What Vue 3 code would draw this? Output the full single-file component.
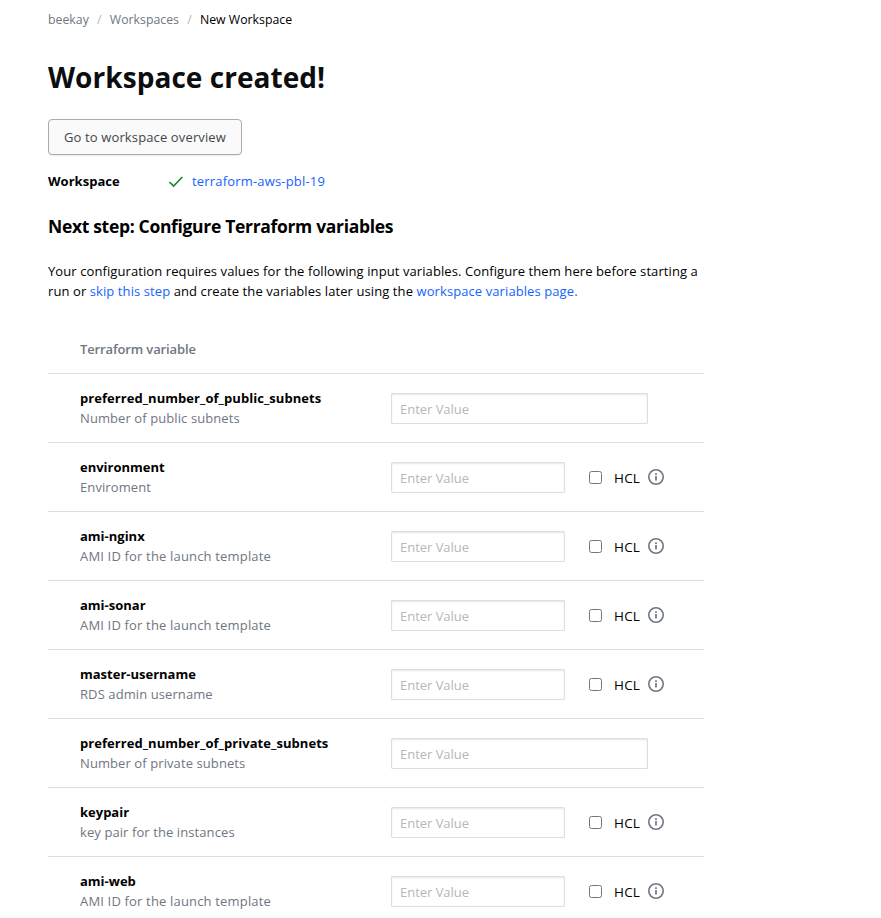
<script setup>
const variables = [
  { name: 'preferred_number_of_public_subnets', desc: 'Number of public subnets', hcl: false },
  { name: 'environment', desc: 'Enviroment', hcl: true },
  { name: 'ami-nginx', desc: 'AMI ID for the launch template', hcl: true },
  { name: 'ami-sonar', desc: 'AMI ID for the launch template', hcl: true },
  { name: 'master-username', desc: 'RDS admin username', hcl: true },
  { name: 'preferred_number_of_private_subnets', desc: 'Number of private subnets', hcl: false },
  { name: 'keypair', desc: 'key pair for the instances', hcl: true },
  { name: 'ami-web', desc: 'AMI ID for the launch template', hcl: true },
]
</script>

<template>
  <main class="page">
    <nav class="crumbs">
      <a class="crumb">beekay</a>
      <span class="sep">/</span>
      <a class="crumb">Workspaces</a>
      <span class="sep">/</span>
      <span class="current">New Workspace</span>
    </nav>

    <h1 class="title">Workspace created!</h1>
    <button class="overview" type="button">Go to workspace overview</button>

    <div class="status">
      <span class="status-label">Workspace</span>
      <svg class="check" viewBox="0 0 16 16" fill="none">
        <path d="M1.4 9 5.6 13 14.4 4" stroke="#168a35" stroke-width="1.7" />
      </svg>
      <a class="link status-link">terraform-aws-pbl-19</a>
    </div>

    <h2 class="subtitle">Next step: Configure Terraform variables</h2>
    <p class="intro">
      Your configuration requires values for the following input variables. Configure them here before starting a<br />
      run or <a class="link">skip this step</a> and create the variables later using the
      <a class="link">workspace variables page.</a>
    </p>

    <section class="table">
      <div class="table-head">Terraform variable</div>
      <div v-for="v in variables" :key="v.name" class="row">
        <div class="info">
          <div class="name" :class="{ snug: v.hcl }">{{ v.name }}</div>
          <div class="desc" :class="{ loose: v.desc.startsWith('AMI') }">{{ v.desc }}</div>
        </div>
        <input class="field" :class="{ wide: !v.hcl }" type="text" placeholder="Enter Value" />
        <div v-if="v.hcl" class="hcl">
          <input class="box" type="checkbox" />
          <span class="hcl-label">HCL</span>
          <svg class="info-icon" viewBox="0 0 16 16" fill="none">
            <circle cx="8" cy="8" r="7.2" stroke="#6f7682" stroke-width="1.6" />
            <path d="M8 7v4.5M8 4.2v1.7" stroke="#6f7682" stroke-width="1.7" />
          </svg>
        </div>
      </div>
    </section>
  </main>
</template>

<style>
html,
body {
  margin: 0;
  background: #fff;
  overflow: hidden;
}
</style>

<style scoped>
.page {
  box-sizing: border-box;
  width: 704px;
  height: 918px;
  overflow: hidden;
  padding: 10px 0 0 48px;
  font-family: "Open Sans", "Noto Sans", sans-serif;
  font-size: 13px;
  line-height: 20px;
  letter-spacing: 0.09px;
  color: #000;
}
.crumbs {
  display: flex;
  height: 20px;
  font-size: 12.3px;
  letter-spacing: 0;
}
.crumb {
  color: #6f7682;
}
.sep {
  width: 21px;
  text-align: center;
  color: #b4b8bf;
}
.title {
  margin: 26px 0 0;
  height: 42px;
  font-size: 28px;
  line-height: 42px;
  font-weight: 700;
  letter-spacing: 0.05px;
  color: #0c0d0f;
}
.overview {
  display: block;
  box-sizing: border-box;
  width: 194px;
  height: 36px;
  margin-top: 21px;
  padding: 0;
  border: 1px solid #a9abb0;
  border-radius: 4px;
  background: #fafafa;
  box-shadow: 0 1px 1px rgba(0, 0, 0, 0.08);
  font: inherit;
  letter-spacing: 0.13px;
  white-space: nowrap;
  color: #42454c;
}
.status {
  display: flex;
  align-items: center;
  height: 20px;
  margin-top: 16px;
}
.status-label {
  width: 120px;
  font-weight: 700;
  letter-spacing: 0.02px;
}
.check {
  width: 16px;
  height: 16px;
  margin-right: 8px;
}
.link {
  color: #1563ff;
}
.status-link {
  letter-spacing: 0.18px;
}
.subtitle {
  margin: 22px 0 0;
  font-size: 17.5px;
  line-height: 26px;
  font-weight: 700;
  letter-spacing: -0.32px;
}
.intro {
  margin: 22px 0 0;
  white-space: nowrap;
}
.table {
  margin-top: 24px;
}
.table-head {
  box-sizing: border-box;
  height: 49px;
  padding: 14px 32px 0;
  border-bottom: 1px solid #dcdee0;
  font-weight: 600;
  letter-spacing: -0.13px;
  color: #6f7682;
}
.row {
  display: flex;
  box-sizing: border-box;
  height: 69px;
  padding: 14px 0 0 32px;
  border-bottom: 1px solid #dcdee0;
}
.info {
  width: 311px;
}
.name {
  font-weight: 700;
  letter-spacing: 0.05px;
}
.name.snug {
  letter-spacing: 0;
}
.desc {
  letter-spacing: 0.09px;
  color: #6f7682;
}
.desc.loose {
  letter-spacing: 0.17px;
}
.field {
  box-sizing: border-box;
  width: 174px;
  height: 31px;
  margin: 5px 0 0;
  padding: 1px 8px 0;
  border: 1px solid #dcdee0;
  border-radius: 1px;
  outline: none;
  background: #fff;
  box-shadow: inset 0 1px 2px rgba(0, 0, 0, 0.1);
  font: inherit;
  letter-spacing: -0.03px;
}
.field.wide {
  width: 257px;
}
.field::placeholder {
  color: #b5b7bb;
  opacity: 1;
}
.hcl {
  display: flex;
  align-items: center;
  height: 20px;
  margin: 10px 0 0 24px;
}
.box {
  appearance: none;
  box-sizing: border-box;
  width: 13px;
  height: 13px;
  margin: 0 12px 0 0;
  border: 1px solid #767676;
  border-radius: 2.5px;
  background: #fff;
}
.hcl-label {
  width: 34px;
  padding-top: 1px;
  font-size: 13.5px;
  letter-spacing: 0.2px;
}
.info-icon {
  width: 16px;
  height: 16px;
}
</style>
